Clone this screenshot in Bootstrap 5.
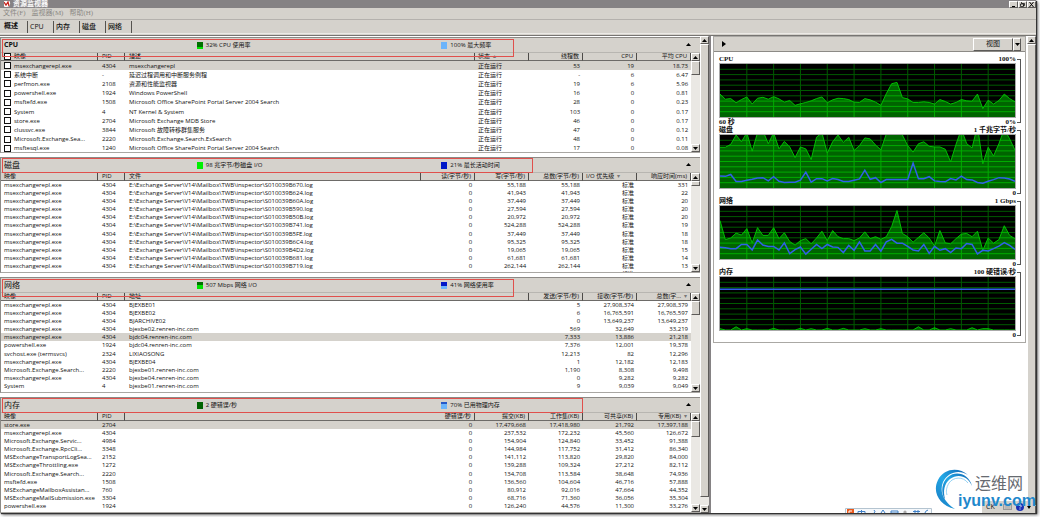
<!DOCTYPE html>
<html lang="zh-CN">
<head>
<meta charset="utf-8">
<meta name="viewport" content="width=device-width, initial-scale=1">
<title>资源监视器</title>
<link href="https://cdn.jsdelivr.net/npm/bootstrap@5.3.0/dist/css/bootstrap.min.css" rel="stylesheet">
<style>
:root{--face:#d5d2cc;--edge:#8c8a86;--ink:#111;--mark-red:#e0504c}
body{margin:0;background:#fff;color:var(--ink);font:6px/8px "Open Sans","Noto Sans CJK SC",sans-serif;overflow:hidden}
button{font:inherit;color:inherit;padding:0;border:0;background:none}
.app{height:100vh;padding:0 4px 4px 0}
.win{background:var(--face);box-shadow:1px 1px 1px #333,2px 2px 3px #777}
.title-bar{height:8px;background:#858284;color:#fff}
.title-bar svg{width:9px;height:7px}
.title-bar h1{font:7px/8px "Liberation Sans","Noto Sans CJK SC",sans-serif;margin:0;text-shadow:0 0 1px #fff}
.raised{background:var(--face);border:1px solid;border-color:#fff #5c5a58 #5c5a58 #fff}
.win-btn{width:9px;height:7px}
.win-btn svg{display:block;width:7px;height:5px}
.menu-bar{height:12px;gap:6px;padding-left:3px;border-bottom:1px solid #b4b1ad}
.menu-bar a{font:7px/11px "Liberation Serif","Noto Sans CJK SC",serif;color:#8b8985;text-decoration:none}
.tab-bar{height:14px;border-bottom:1px solid #eceae6}
.tab-bar button{width:26px;height:12px;font-size:7px;border-right:1px solid #55534f;text-align:left;padding-left:2px}
.tab-bar button.active{width:28px;font-weight:bold;padding:0 0 2px 4px}
.tab-bar .cjk{font-weight:500}
.main-grid{display:grid;grid-template-columns:minmax(0,709fr) 4px minmax(0,323fr);margin-top:1px;border-top:1px solid #777572}
.splitter{background:#fff;border-left:2px solid #858284}
.vbar{width:9px;background:#eae8e4}
.vbar button{height:8px;width:100%}
.vbar svg,.spin svg{display:block;width:5px;height:3px;margin:auto}
.panels{gap:4px;padding-top:1px;background:#fff}
.panel-box{flex:1 1 0;border-left:1px solid var(--edge);border-bottom:1px solid #a9a7a3}
.panel-head{display:grid;grid-template-columns:28% 35% 1fr 16px;height:16px;flex:none;background:var(--face);border-top:1px solid var(--edge);border-bottom:1px solid #b8b6b1}
.panel-head h2{font:8px/14px "Open Sans","Noto Sans CJK SC",sans-serif;margin:0;padding-left:3px}
.panel-head h2.latin{font-weight:bold;font-size:7px}
.outline{position:absolute;left:1px;top:1px;height:15px;border:1px solid var(--mark-red);pointer-events:none}
.outline.deep{height:18px;top:2px}
.swatch{width:6px;height:7px;margin-right:3px}
.grid-table{table-layout:fixed;width:100%;height:105px;border-collapse:separate;border-spacing:0}
.grid-table.checks{height:100px}
.grid-table th,.grid-table td{padding:0 3px;line-height:8px;white-space:nowrap;overflow:hidden;vertical-align:middle}
.grid-table th{height:8px;background:var(--face);font-weight:normal;border-right:1px solid #4e4c49;border-bottom:1px solid #6d6b68;line-height:7px}
.grid-table td:nth-child(2),.grid-table td:nth-child(3),.grid-table th:nth-child(2),.grid-table th:nth-child(3){padding-left:4px}
.grid-table .c-name{width:97px}.grid-table .c-pid{width:27px}.grid-table .c-num{width:54px}
.grid-table .num{text-align:right}
.grid-table tr.sel td{background:var(--face)}
.grid-table label{display:flex;align-items:center;gap:3px}
.grid-table input{appearance:none;width:7px;height:7px;margin:0;border:1px solid #111;background:#fff;flex:none}
.sort{color:#777;margin-left:3px}
.side{background:#fff}
.graphs{border:1px solid #aaa8a4;margin-right:1px}
.graphs-head{height:15px;background:var(--face);border-bottom:1px solid var(--edge)}
.view-btn{width:40px;height:13px;font-size:7px}
.spin{width:8px;height:13px}
.graph{display:grid;grid-template-columns:1fr 5px;margin-left:5px;margin-right:4px;font:bold 7px/8px "Liberation Serif","Noto Sans CJK SC",serif}
.graph svg{display:block;width:100%;height:55px;background:#000;border:1px solid #aaa}
.bracket{border:1px solid #555;border-left:0;margin:4px 0 3px 1px}
.graph-list{padding-top:3px;padding-bottom:3px}
.tray{right:5px;bottom:4px;height:12px;background:var(--face);width:53px;font-size:7px}
.ime{right:108px;bottom:4px;width:87px}
.brand{right:3px;bottom:4px;width:102px;height:45px}
.brand-cn{position:absolute;left:40px;top:6px;font:16px/16px "Noto Sans CJK SC",sans-serif;color:#666a70}
.brand-en{position:absolute;left:23px;top:25px;font:bold 16px/16px "Liberation Sans",sans-serif;color:#1f88cc}
.tri{fill:#000}
</style>
</head>
<body>
<div class="app">
<div class="win d-flex flex-column h-100 position-relative">
  <header class="title-bar d-flex align-items-center flex-shrink-0 overflow-hidden">
    <svg class="ms-1" viewBox="0 0 9 7"><circle cx="2.5" cy="2.5" r="3.6" fill="#fff"/><path d="M0 1L2 4 4 1 5 5" fill="none" stroke="#c8251e" stroke-width="1.3"/></svg>
    <h1>资源监视器</h1>
    <div class="ms-auto d-flex">
      <button class="raised win-btn" aria-label="最小化"><svg viewBox="0 0 7 5"><path d="M2 4.5h3" stroke="#000"/></svg></button>
      <button class="raised win-btn" aria-label="还原"><svg viewBox="0 0 7 5"><path d="M2.5 0v1.5h3v2H4M1.5 2h3v2.5h-3z" fill="none" stroke="#000" stroke-width=".7"/></svg></button>
      <button class="raised win-btn" aria-label="关闭"><svg viewBox="0 0 7 5"><path d="M1.5 0l4 5m0-5l-4 5" stroke="#000"/></svg></button>
    </div>
  </header>
  <nav class="menu-bar d-flex flex-shrink-0">
    <a href="#">文件(F)</a><a href="#">监视器(M)</a><a href="#">帮助(H)</a>
  </nav>
  <div class="tab-bar d-flex align-items-end flex-shrink-0" role="tablist">
    <button role="tab" aria-selected="true" class="active">概述</button><button role="tab">CPU</button><button role="tab" class="cjk">内存</button><button role="tab" class="cjk">磁盘</button><button role="tab" class="cjk">网络</button>
  </div>
  <main class="main-grid flex-grow-1">
    <div class="d-flex overflow-hidden">
      <div class="panels d-flex flex-column flex-grow-1 overflow-hidden" id="panels"></div>
      <div class="vbar d-flex flex-column flex-shrink-0">
        <button class="raised" aria-label="向上"><svg viewBox="0 0 5 3"><path class="tri" d="M0 3L2.5 0 5 3z"/></svg></button>
        <div class="raised flex-grow-1 mb-2"></div>
        <button class="raised" aria-label="向下"><svg viewBox="0 0 5 3"><path class="tri" d="M0 0L2.5 3 5 0z"/></svg></button>
      </div>
    </div>
    <div class="splitter"></div>
    <div class="side d-flex">
      <div class="flex-grow-1">
        <section class="graphs">
          <div class="graphs-head d-flex align-items-center">
            <button class="ms-1 ps-1 me-auto" aria-label="折叠"><svg class="d-block" width="4" height="6" viewBox="0 0 4 6"><path class="tri" d="M0 0l4 3-4 3z"/></svg></button>
            <button class="raised view-btn">视图</button><button class="raised spin me-1" aria-label="选择视图"><svg viewBox="0 0 5 3"><path class="tri" d="M0 0L2.5 3 5 0z"/></svg></button>
          </div>
          <div class="graph-list" id="graphs"></div>
        </section>
      </div>
      <div class="vbar d-flex flex-column flex-shrink-0">
        <button class="raised" aria-label="向上"><svg viewBox="0 0 5 3"><path class="tri" d="M0 3L2.5 0 5 3z"/></svg></button>
        <div class="raised flex-grow-1"></div>
        <button class="raised" aria-label="向下"><svg viewBox="0 0 5 3"><path class="tri" d="M0 0L2.5 3 5 0z"/></svg></button>
      </div>
    </div>
  </main>
</div>
</div>

<div class="ime position-absolute">
  <svg class="d-block" width="87" height="5" viewBox="0 0 87 5"><path d="M.5 5V.5h86V5" fill="#f5f8fb" stroke="#b4c4d0"/><path d="M2 1h7v4H2z" fill="#e8581c"/><path d="M7 3H4v2" stroke="#fff" fill="none"/><path d="M13 5V3.5h7V5M16.5 2v3M29 2q2 2 0 3M36 5l2-3 2 3M46 3h7v2h-7zM68 3.5h7M70 2v3M73 2v3M83 2q-3 1-3 3" fill="none" stroke="#3f80c8"/><circle cx="60" cy="4" r="1.6" fill="#aaa"/></svg>
</div>
<div class="tray position-absolute d-flex align-items-center">
  <span class="ms-1">CK</span>
  <svg class="ms-2" width="9" height="6" viewBox="0 0 9 6"><rect x=".5" y=".5" width="8" height="5" fill="#c6c4c0" stroke="#999"/><path d="M2 2h5M2 4h5" stroke="#aaa"/></svg>
  <svg class="ms-1" width="8" height="8" viewBox="0 0 8 8"><circle cx="4" cy="4" r="4" fill="#1a2fb4"/><path d="M3 3q0-1.500 1.200-1.300T5 3.500L4 4.500M4 5.500v1" fill="none" stroke="#fff"/></svg>
  <svg class="ms-auto me-1" width="4" height="3" viewBox="0 0 4 3"><path class="tri" d="M0 0h4L2 3z"/></svg>
</div>
<div class="brand position-absolute">
  <svg class="d-block" width="40" height="45" viewBox="0 0 40 45">
    <defs><linearGradient id="arc" x1="0" y1="1" x2="1" y2="0"><stop offset="0" stop-color="#1878c0"/><stop offset=".5" stop-color="#22a8e6"/><stop offset="1" stop-color="#0d5fae"/></linearGradient></defs>
    <path fill="url(#arc)" d="M33 7C24-1 9 0 3 12-3 24 4 37 20 41 9 34 4 24 8 14 13 4 24 1 33 7z"/>
    <path fill="url(#arc)" d="M37 18C34 6 21 2 13 9 5 16 7 27 10 31 8 23 9 16 15 11 23 5 33 8 37 18z"/>
    <path fill="none" stroke="#7cc8f0" stroke-width=".8" d="M33 15C28 8 18 9 14 15 11 20 11 24 12 27"/>
  </svg>
  <div class="brand-cn">运维网</div><div class="brand-en">iyunv.com</div>
</div>

<script>
const up = '<svg viewBox="0 0 5 3"><path class="tri" d="M0 3L2.5 0 5 3z"/></svg>';
const down = '<svg viewBox="0 0 5 3"><path class="tri" d="M0 0L2.5 3 5 0z"/></svg>';
const path = 'E:\\Exchange Server\\V14\\Mailbox\\TWB\\inspector\\S010039B';
const rep = 'msexchangerepl.exe';
const disk = (id, n, t) => [rep, '4304', path + id + '.log', '0', n, n, '标准', t];

const panels = [
  {title: 'CPU', latin: true, checks: true, box: 513, deep: true, thumb: 14, sel: 0,
   m: [['32% CPU 使用率', '#00e400', '#007000', 68], ['100% 最大频率', '#6cb4fa', '#6cb4fa', 0]],
   head: ['映像', 'PID', '描述', '状态|up', '线程数', 'CPU', '平均 CPU'], nums: [4, 5, 6],
   rows: [
    [rep, '4304', 'msexchangerepl', '正在运行', '53', '19', '18.73'],
    ['系统中断', '-', '延迟过程调用和中断服务例程', '正在运行', '-', '6', '6.47'],
    ['perfmon.exe', '2108', '资源和性能监视器', '正在运行', '19', '6', '5.96'],
    ['powershell.exe', '1924', 'Windows PowerShell', '正在运行', '16', '0', '0.81'],
    ['msftefd.exe', '1508', 'Microsoft Office SharePoint Portal Server 2004 Search', '正在运行', '28', '0', '0.23'],
    ['System', '4', 'NT Kernel & System', '正在运行', '103', '0', '0.17'],
    ['store.exe', '2704', 'Microsoft Exchange MDB Store', '正在运行', '46', '0', '0.17'],
    ['clussvc.exe', '3844', 'Microsoft 故障转移群集服务', '正在运行', '47', '0', '0.12'],
    ['Microsoft.Exchange.Sea...', '2220', 'Microsoft.Exchange.Search.ExSearch', '正在运行', '48', '0', '0.11'],
    ['msftesql.exe', '1240', 'Microsoft Office SharePoint Portal Server 2004 Search', '正在运行', '17', '0', '0.08']]},
  {title: '磁盘', box: 532, thumb: 5, sel: -1,
   m: [['98 兆字节/秒磁盘 I/O', '#00f000', '#00f000', 0], ['21% 最长活动时间', '#0018c8', '#0018c8', 0]],
   head: ['映像', 'PID', '文件', '读(字节/秒)', '写(字节/秒)', '总数(字节/秒)', 'I/O 优先级|down', '响应时间(ms)'], nums: [3, 4, 5, 6, 7], left: 6,
   rows: [disk('670', '55,188', '331'), disk('624', '41,943', '22'), disk('60A', '37,449', '20'), disk('590', '27,594', '20'),
    disk('50B', '20,972', '20'), disk('741', '524,288', '19'), disk('5FE', '37,449', '18'), disk('6C4', '95,325', '18'),
    disk('4D2', '19,065', '15'), disk('681', '61,681', '14'), disk('719', '262,144', '13'), disk('5BB', '1,171,288', '12')]},
  {title: '网络', box: 513, deep: true, thumb: 14, sel: 4,
   m: [['507 Mbps 网络 I/O', '#00e400', '#007000', 49], ['41% 网络使用率', '#6cb4fa', '#0018c8', 59]],
   head: ['映像', 'PID', '地址', '发送(字节/秒)', '接收(字节/秒)', '总数(字...|down'], nums: [3, 4, 5],
   rows: [
    [rep, '4304', 'BJEXBE01', '5', '27,908,374', '27,908,379'],
    [rep, '4304', 'BJEXBE02', '6', '16,765,591', '16,765,597'],
    [rep, '4304', 'BJARCHIVE02', '0', '13,649,237', '13,649,237'],
    [rep, '4304', 'bjexbe02.renren-inc.com', '569', '32,649', '33,219'],
    [rep, '4304', 'bjdc04.renren-inc.com', '7,333', '13,886', '21,218'],
    ['powershell.exe', '1924', 'bjdc04.renren-inc.com', '7,376', '12,001', '19,378'],
    ['svchost.exe (termsvcs)', '2324', 'LIXIAOSONG', '12,213', '82', '12,296'],
    [rep, '4304', 'BJEXBE04', '1', '12,182', '12,183'],
    ['Microsoft.Exchange.Search...', '2220', 'bjexbe01.renren-inc.com', '1,190', '8,308', '9,498'],
    [rep, '4304', 'bjexbe04.renren-inc.com', '0', '9,282', '9,282'],
    ['System', '4', 'bjexbe01.renren-inc.com', '9', '9,039', '9,049'],
    ['Microsoft.Exchange.Search...', '2220', 'bjexbe02.renren-inc.com', '151', '4,354', '4,505']]},
  {title: '内存', box: 582, thumb: 16, sel: 0,
   m: [['2 硬错误/秒', '#006400', '#006400', 0], ['70% 已用物理内存', '#6cb4fa', '#2458c8', 30]],
   head: ['映像', 'PID', '硬错误/秒', '提交(KB)', '工作集(KB)', '可共享(KB)', '专用(KB)|down'], nums: [2, 3, 4, 5, 6],
   rows: [
    ['store.exe', '2704', '0', '17,479,668', '17,418,980', '21,792', '17,397,188'],
    [rep, '4304', '0', '237,532', '172,232', '45,560', '126,672'],
    ['Microsoft.Exchange.Servic...', '4984', '0', '154,904', '124,840', '33,452', '91,388'],
    ['Microsoft.Exchange.RpcCli...', '3348', '0', '144,984', '117,752', '31,412', '86,340'],
    ['MSExchangeTransportLogSea...', '2152', '0', '141,112', '113,820', '29,820', '84,000'],
    ['MSExchangeThrottling.exe', '1272', '0', '139,288', '109,324', '27,212', '82,112'],
    ['Microsoft.Exchange.Search...', '2220', '0', '134,708', '113,584', '38,648', '74,936'],
    ['msftefd.exe', '1508', '0', '136,560', '104,604', '46,716', '57,888'],
    ['MSExchangeMailboxAssistan...', '760', '0', '80,912', '92,016', '47,664', '44,352'],
    ['MSExchangeMailSubmission.exe', '3304', '0', '68,716', '71,360', '36,056', '35,304'],
    ['powershell.exe', '1924', '0', '126,240', '44,576', '11,300', '33,276'],
    ['\u00a0', '', '', '', '', '', '']]}
];

const esc = s => s.replace(/&/g, '&amp;');
document.getElementById('panels').innerHTML = panels.map(p => {
  const cls = i => p.nums.includes(i) ? ' class="num"' : '';
  const cols = p.head.map((h, i) => `<col class="${i == 0 ? 'c-name' : i == 1 ? 'c-pid' : i == 2 ? '' : 'c-num'}">`).join('');
  const ths = p.head.map((h, i) => {
    const [t, s] = h.split('|');
    const mark = s ? `<span class="sort">${s == 'up' ? '▴' : '▾'}</span>` : '';
    const text = p.checks && i == 0 ? `<label><input type="checkbox">${t}</label>` : t + mark;
    return `<th scope="col"${i == p.left ? '' : cls(i)}>${text}</th>`;
  }).join('');
  const trs = p.rows.map((r, n) => `<tr${n == p.sel ? ' class="sel"' : ''}>` + r.map((v, i) =>
    `<td${cls(i)}>${p.checks && i == 0 ? `<label><input type="checkbox">${esc(v)}</label>` : esc(v)}</td>`).join('') + '</tr>').join('');
  const ms = p.m.map(([t, a, b, k]) =>
    `<div class="d-flex align-items-center"><span class="swatch" style="background:linear-gradient(${b} ${k}%,${a} ${k}%)"></span>${t}</div>`).join('');
  return `<section class="panel-box position-relative d-flex flex-column overflow-hidden">
    <div class="panel-head"><h2${p.latin ? ' class="latin"' : ''}>${p.title}</h2>${ms}
      <button class="spin" aria-label="折叠${p.title}">${up}</button></div>
    <div class="d-flex flex-grow-1 overflow-hidden">
      <div class="flex-grow-1 overflow-hidden"><table class="grid-table${p.checks ? ' checks' : ''}"><colgroup>${cols}</colgroup><thead><tr>${ths}</tr></thead><tbody>${trs}</tbody></table></div>
      <div class="vbar d-flex flex-column flex-shrink-0"><button class="raised" aria-label="向上">${up}</button>
        <div class="raised" style="height:${p.thumb}px"></div><button class="raised mt-auto" aria-label="向下">${down}</button></div>
    </div>
    <div class="outline${p.deep ? ' deep' : ''}" style="width:${(p.box / 7).toFixed(1)}%"></div>
  </section>`;
}).join('');

/* Samples are distances from the top edge on a 164-unit scale, one per 1.1 seconds. */
const spikes = {0: 4, 3: 10, 5: 4, 10: 5, 15: 5, 17: 4, 20: 5, 23: 5, 27: 4, 30: 4, 37: 10, 40: 7, 43: 4, 47: 7, 49: 4, 50: 4};
const graphs = [
  {l: 'CPU', r: '100%', fl: '60 秒', fr: '0%', top: 190,
   g: [283,299,297,310,300,292,314,296,293,299,291,298,308,303,318,313,309,304,297,292,310,301,296,297,300,308,309,297,301,308,318,282,251,247,294,298,309,309,307,309,314,300,306,314,309,300,304,305,283,328,302,314,303,283,297,307]},
  {l: '磁盘', r: '1 千兆字节/秒', fl: '', fr: '0', top: 403,
   g: [441,441,432,403,424,396,453,396,390,430,396,446,423,440,473,440,446,479,410,396,459,424,403,426,410,451,436,412,415,434,449,400,380,380,403,436,456,430,424,438,440,440,447,486,432,385,430,443,375,492,441,468,430,385,415,450],
   b: [530,531,525,547,547,543,540,536,535,545,532,546,550,549,549,543,518,549,538,538,545,538,541,547,547,543,539,512,540,535,550,541,541,541,541,541,490,538,538,532,545,547,548,538,542,530,541,542,550,552,546,541,535,536,539,546]},
  {l: '网络', r: '1 Gbps', fl: '', fr: '0', top: 48,
   g: [93,152,147,132,138,118,162,115,139,139,115,149,131,158,169,155,149,165,147,126,155,124,143,149,149,155,147,128,149,143,151,143,112,62,133,143,160,145,131,147,172,124,162,165,149,135,133,143,126,185,147,163,152,109,139,149],
   b: [176,177,180,180,167,167,184,153,169,173,173,184,162,195,183,175,197,182,167,180,167,175,176,192,170,185,159,187,187,167,188,159,151,163,163,173,184,187,167,195,173,185,180,192,178,180,164,167,196,185,187,180,172,161,170,182]},
  {l: '内存', r: '100 硬错误/秒', fl: '', fr: '0', top: 0,
   g: Array.from({length: 56}, (_, i) => 164 - (spikes[i] || 0)), b: Array(56).fill(38)}
];
let lines = '';
for (let i = 1; i < 11; i++) lines += `M${i * 81} 0V164`;
for (let i = 1; i < 10; i++) lines += `M0 ${i * 16.4}H891`;
document.getElementById('graphs').innerHTML = graphs.map((c, n) => {
  const pts = a => a.map((y, i) => (i * 16.2).toFixed(1) + ',' + (y - c.top)).join(' ');
  const area = `0,166 ${pts(c.g)} 891,166`;
  const thin = 'vector-effect="non-scaling-stroke" fill="none"';
  return `<div class="graph"><div>
    <div class="d-flex justify-content-between"><span>${c.l}</span><span>${c.r}</span></div>
    <svg viewBox="0 0 891 164" preserveAspectRatio="none" role="img" aria-label="${c.l}">
      <clipPath id="a${n}"><polygon points="${area}"/></clipPath>
      <path d="${lines}" stroke="#005a00" ${thin}/>
      <polygon points="${area}" fill="#006400"/>
      <path d="${lines}" stroke="#00ac00" clip-path="url(#a${n})" ${thin}/>
      <polyline points="${pts(c.g)}" stroke="#00be00" ${thin}/>
      ${c.b ? `<polyline points="${pts(c.b)}" stroke="#3060e8" stroke-width="1.5" ${thin}/>` : ''}
    </svg>
    <div class="d-flex justify-content-between"><span>${c.fl}</span><span>${c.fr}</span></div>
  </div><div class="bracket"></div></div>`;
}).join('');
</script>
<script src="https://cdn.jsdelivr.net/npm/bootstrap@5.3.0/dist/js/bootstrap.bundle.min.js"></script>
</body>
</html>
